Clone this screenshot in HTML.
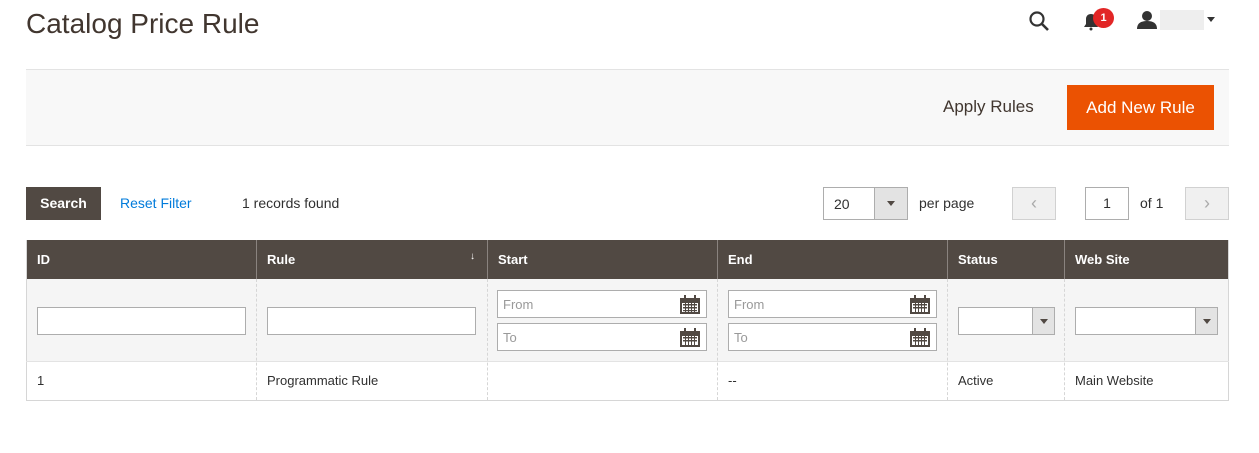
<!DOCTYPE html>
<html><head><style>
*{box-sizing:border-box;margin:0;padding:0}
body{width:1259px;height:453px;background:#fff;font-family:"Liberation Sans",sans-serif;color:#303030;position:relative;overflow:hidden;font-size:14px}
.a{position:absolute}
.inp{position:absolute;background:#fff;border:1px solid #adadad;height:28px;font-size:13px;color:#999;padding:6px 5px}
.cal{position:absolute;right:6px;top:4px;width:20px;height:19px}
.th{position:absolute;top:252px;color:#fff;font-weight:bold;font-size:13px}
.td{position:absolute;top:373px;font-size:13px;color:#303030}
.vl{position:absolute;top:279px;height:121px;border-left:1px dashed #d6d6d6}
.sel{position:absolute;top:307px;height:28px;background:#fff;border:1px solid #adadad}
.sel .ar{position:absolute;right:0;top:0;bottom:0;width:22px;border-left:1px solid #adadad;background:#e3e3e3}
.sel .ar:after{content:"";position:absolute;left:7px;top:11px;border:4px solid transparent;border-top:5px solid #514943}
</style></head><body>
<div class="a" style="left:26px;top:8px;font-size:28px;color:#41362f">Catalog Price Rule</div>
<svg class="a" style="left:1028px;top:10px" width="22" height="22" viewBox="0 0 22 22"><circle cx="9" cy="9" r="6.5" fill="none" stroke="#333" stroke-width="2.2"/><line x1="14" y1="14" x2="20" y2="20" stroke="#333" stroke-width="2.6"/></svg>
<svg class="a" style="left:1083px;top:13px" width="16" height="18" viewBox="0 0 16 18"><path d="M8 1c-3 0-5 2-5 5v5l-2 3h14l-2-3V6c0-3-2-5-5-5z" fill="#333"/><circle cx="8" cy="16" r="1.5" fill="#333"/></svg>
<div class="a" style="left:1093px;top:8px;width:21px;height:20px;border-radius:50%;background:#e22626;color:#fff;font-size:11px;font-weight:bold;text-align:center;line-height:20px">1</div>
<svg class="a" style="left:1137px;top:10px" width="20" height="19" viewBox="0 0 20 19"><circle cx="10" cy="6" r="5" fill="#333"/><path d="M0 19c0-6 4-8 10-8s10 2 10 8z" fill="#333"/></svg>
<div class="a" style="left:1160px;top:10px;width:44px;height:20px;background:#eee"></div>
<div class="a" style="left:1207px;top:17px;border:4px solid transparent;border-top:5px solid #333"></div>
<div class="a" style="left:26px;top:69px;width:1203px;height:77px;background:#f8f8f8;border-top:1px solid #e3e3e3;border-bottom:1px solid #e3e3e3"></div>
<div class="a" style="left:943px;top:97px;font-size:17px;color:#41362f">Apply Rules</div>
<div class="a" style="left:1067px;top:85px;width:147px;height:45px;background:#eb5202;color:#fff;font-size:17px;text-align:center;line-height:45px">Add New Rule</div>
<div class="a" style="left:26px;top:187px;width:75px;height:33px;background:#514943;color:#fff;font-size:14px;font-weight:bold;text-align:center;line-height:33px">Search</div>
<div class="a" style="left:120px;top:195px;color:#007bdb;font-size:14px">Reset Filter</div>
<div class="a" style="left:242px;top:195px;font-size:14px">1 records found</div>
<div class="a" style="left:823px;top:187px;width:85px;height:33px;border:1px solid #adadad;background:#fff;font-size:14px;padding:8px 10px">20</div>
<div class="a" style="left:874px;top:188px;width:33px;height:31px;background:#e3e3e3;border-left:1px solid #adadad"><div style="position:absolute;left:12px;top:13px;border:4px solid transparent;border-top:5px solid #514943"></div></div>
<div class="a" style="left:919px;top:195px">per page</div>
<div class="a" style="left:1012px;top:187px;width:44px;height:33px;background:#f0f0f0;border:1px solid #d1d1d1;color:#aaa;text-align:center;line-height:30px;font-size:18px">&#8249;</div>
<div class="a" style="left:1085px;top:187px;width:44px;height:33px;border:1px solid #adadad;text-align:center;line-height:31px">1</div>
<div class="a" style="left:1140px;top:195px">of 1</div>
<div class="a" style="left:1185px;top:187px;width:44px;height:33px;background:#f0f0f0;border:1px solid #d1d1d1;color:#aaa;text-align:center;line-height:30px;font-size:18px">&#8250;</div>
<div class="a" style="left:26px;top:240px;width:1203px;height:40px;background:#514943"></div>
<div class="a" style="left:26px;top:279px;width:1203px;height:82px;background:#f5f5f5"></div>
<div class="a" style="left:26px;top:240px;width:1203px;height:161px;border:1px solid #d6d6d6;border-top:none"></div>
<div class="a" style="left:26px;top:361px;width:1203px;border-top:1px solid #e3e3e3"></div>
<div class="a" style="left:256px;top:240px;height:40px;border-left:1px solid #8a837f"></div>
<div class="a" style="left:487px;top:240px;height:40px;border-left:1px solid #8a837f"></div>
<div class="a" style="left:717px;top:240px;height:40px;border-left:1px solid #8a837f"></div>
<div class="a" style="left:947px;top:240px;height:40px;border-left:1px solid #8a837f"></div>
<div class="a" style="left:1064px;top:240px;height:40px;border-left:1px solid #8a837f"></div>
<div class="vl" style="left:256px"></div><div class="vl" style="left:487px"></div><div class="vl" style="left:717px"></div><div class="vl" style="left:947px"></div><div class="vl" style="left:1064px"></div>
<div class="th" style="left:37px">ID</div>
<div class="th" style="left:267px">Rule</div>
<div class="th" style="left:470px;font-size:10px;top:251px">&#8595;</div>
<div class="th" style="left:498px">Start</div>
<div class="th" style="left:728px">End</div>
<div class="th" style="left:958px">Status</div>
<div class="th" style="left:1075px">Web Site</div>
<div class="inp" style="left:37px;top:307px;width:209px"></div>
<div class="inp" style="left:267px;top:307px;width:209px"></div>
<div class="inp" style="left:497px;top:290px;width:210px">From<svg class="cal" viewBox="0 0 20 19"><rect x="0" y="3" width="20" height="16" fill="#514943"/><rect x="2" y="8" width="16" height="9" fill="#fff"/><g fill="#514943"><rect x="3" y="9" width="14" height="1.5"/><rect x="3" y="12" width="14" height="1.5"/><rect x="3" y="15" width="14" height="1.2"/><rect x="5" y="8" width="1" height="9"/><rect x="8" y="8" width="1" height="9"/><rect x="11" y="8" width="1" height="9"/><rect x="14" y="8" width="1" height="9"/></g><rect x="4" y="0" width="2" height="5" fill="#514943"/><rect x="14" y="0" width="2" height="5" fill="#514943"/></svg></div>
<div class="inp" style="left:497px;top:323px;width:210px">To<svg class="cal" viewBox="0 0 20 19"><rect x="0" y="3" width="20" height="16" fill="#514943"/><rect x="2" y="8" width="16" height="9" fill="#fff"/><g fill="#514943"><rect x="3" y="9" width="14" height="1.5"/><rect x="3" y="12" width="14" height="1.5"/><rect x="5" y="8" width="1" height="9"/><rect x="8" y="8" width="1" height="9"/><rect x="11" y="8" width="1" height="9"/><rect x="14" y="8" width="1" height="9"/></g><rect x="4" y="0" width="2" height="5" fill="#514943"/><rect x="14" y="0" width="2" height="5" fill="#514943"/></svg></div>
<div class="inp" style="left:728px;top:290px;width:209px">From<svg class="cal" viewBox="0 0 20 19"><rect x="0" y="3" width="20" height="16" fill="#514943"/><rect x="2" y="8" width="16" height="9" fill="#fff"/><g fill="#514943"><rect x="3" y="9" width="14" height="1.5"/><rect x="3" y="12" width="14" height="1.5"/><rect x="5" y="8" width="1" height="9"/><rect x="8" y="8" width="1" height="9"/><rect x="11" y="8" width="1" height="9"/><rect x="14" y="8" width="1" height="9"/></g><rect x="4" y="0" width="2" height="5" fill="#514943"/><rect x="14" y="0" width="2" height="5" fill="#514943"/></svg></div>
<div class="inp" style="left:728px;top:323px;width:209px">To<svg class="cal" viewBox="0 0 20 19"><rect x="0" y="3" width="20" height="16" fill="#514943"/><rect x="2" y="8" width="16" height="9" fill="#fff"/><g fill="#514943"><rect x="3" y="9" width="14" height="1.5"/><rect x="3" y="12" width="14" height="1.5"/><rect x="5" y="8" width="1" height="9"/><rect x="8" y="8" width="1" height="9"/><rect x="11" y="8" width="1" height="9"/><rect x="14" y="8" width="1" height="9"/></g><rect x="4" y="0" width="2" height="5" fill="#514943"/><rect x="14" y="0" width="2" height="5" fill="#514943"/></svg></div>
<div class="sel" style="left:958px;width:97px"><div class="ar"></div></div>
<div class="sel" style="left:1075px;width:143px"><div class="ar"></div></div>
<div class="td" style="left:37px">1</div>
<div class="td" style="left:267px">Programmatic Rule</div>
<div class="td" style="left:728px">--</div>
<div class="td" style="left:958px">Active</div>
<div class="td" style="left:1075px">Main Website</div>
</body></html>
